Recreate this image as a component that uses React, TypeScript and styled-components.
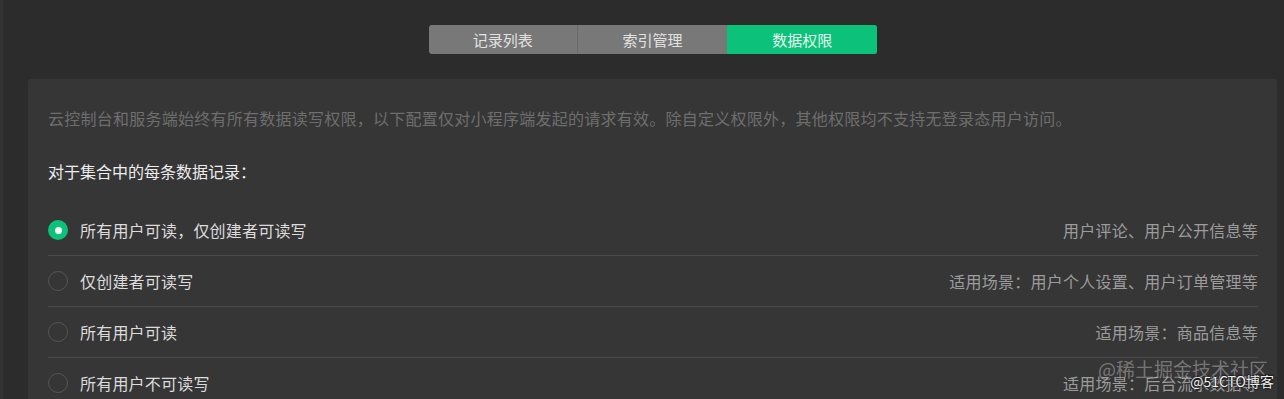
import styled, { createGlobalStyle } from 'styled-components';
import { useState } from 'react';

const GlobalStyle = createGlobalStyle`
  html, body {
    margin: 0;
    padding: 0;
    background: #2c2c2c;
  }
  body {
    font-family: "Noto Sans CJK SC", "Noto Sans", sans-serif;
    -webkit-font-smoothing: antialiased;
  }
`;

const Page = styled.div`
  position: relative;
  width: 1284px;
  height: 399px;
  overflow: hidden;
  box-sizing: border-box;
  padding: 25px 7px 0 25px;
  background: #2c2c2c;
  border-left: 3px solid #333;
`;

const TabBar = styled.div`
  display: flex;
  width: 448px;
  height: 29px;
  margin: 0 auto 25px;
  border-radius: 3px;
  overflow: hidden;
  background: #787878;
`;

const Tab = styled.button<{ active?: boolean }>`
  flex: 1;
  border: none;
  padding: 0;
  margin: 0;
  font-family: inherit;
  font-size: 15px;
  line-height: 29px;
  cursor: pointer;
  background: ${p => (p.active ? '#0cc27b' : 'transparent')};
  color: ${p => (p.active ? '#e6f7ee' : '#e2e2e2')};
  border-left: 1px solid ${p => (p.active ? 'transparent' : '#6a6a6a')};

  &:first-child {
    border-left: none;
  }
`;

const Card = styled.div`
  background: #363636;
  border-radius: 3px;
  padding: 28px 19px 0 20px;
  height: 330px;
  box-sizing: border-box;
`;

const Note = styled.div`
  font-size: 16px;
  line-height: 22px;
  letter-spacing: 0.25px;
  color: #6e6e6e;
`;

const Heading = styled.div`
  margin-top: 31px;
  font-size: 16px;
  line-height: 22px;
  color: #ededed;
`;

const OptionList = styled.div`
  margin-top: 23px;
`;

const OptionRow = styled.label`
  display: flex;
  align-items: center;
  height: 50px;
  border-bottom: 1px solid #4a4a4a;
  cursor: pointer;
`;

const Radio = styled.span<{ checked?: boolean }>`
  width: 20px;
  height: 20px;
  box-sizing: border-box;
  border-radius: 50%;
  margin-right: 12px;
  flex-shrink: 0;
  display: flex;
  align-items: center;
  justify-content: center;
  background: ${p => (p.checked ? '#0cc27b' : 'transparent')};
  border: ${p => (p.checked ? 'none' : '1px solid #555')};

  &::after {
    content: '';
    display: ${p => (p.checked ? 'block' : 'none')};
    width: 7px;
    height: 7px;
    border-radius: 50%;
    background: #f4fff9;
  }
`;

const OptionLabel = styled.span`
  flex: 1;
  font-size: 16px;
  letter-spacing: 0.2px;
  color: #dcdcdc;
`;

const OptionHint = styled.span`
  font-size: 16px;
  letter-spacing: 0.25px;
  color: #9c9c9c;
`;

const Watermark = styled.div`
  position: absolute;
  right: 16px;
  bottom: 17px;
  font-size: 19px;
  color: rgba(200, 200, 200, 0.45);
  pointer-events: none;
`;

const Watermark2 = styled.div`
  position: absolute;
  right: 10px;
  bottom: 8px;
  font-size: 14px;
  color: #f2f2f2;
  text-shadow: 0 0 2px #000, 0 0 2px #000;
  pointer-events: none;
`;

const TABS = ['记录列表', '索引管理', '数据权限'];

const OPTIONS = [
  { label: '所有用户可读，仅创建者可读写', hint: '用户评论、用户公开信息等' },
  { label: '仅创建者可读写', hint: '适用场景：用户个人设置、用户订单管理等' },
  { label: '所有用户可读', hint: '适用场景：商品信息等' },
  { label: '所有用户不可读写', hint: '适用场景：后台流水数据等' },
];

export default function App() {
  const [tab, setTab] = useState(2);
  const [selected, setSelected] = useState(0);

  return (
    <Page>
      <GlobalStyle />
      <TabBar>
        {TABS.map((t, i) => (
          <Tab key={t} active={i === tab} onClick={() => setTab(i)}>
            {t}
          </Tab>
        ))}
      </TabBar>

      <Card>
        <Note>
          云控制台和服务端始终有所有数据读写权限，以下配置仅对小程序端发起的请求有效。除自定义权限外，其他权限均不支持无登录态用户访问。
        </Note>
        <Heading>对于集合中的每条数据记录：</Heading>

        <OptionList>
          {OPTIONS.map((o, i) => (
            <OptionRow key={o.label} onClick={() => setSelected(i)}>
              <Radio checked={i === selected} />
              <OptionLabel>{o.label}</OptionLabel>
              <OptionHint>{o.hint}</OptionHint>
            </OptionRow>
          ))}
        </OptionList>
      </Card>

      <Watermark>@稀土掘金技术社区</Watermark>
      <Watermark2>@51CTO博客</Watermark2>
    </Page>
  );
}
